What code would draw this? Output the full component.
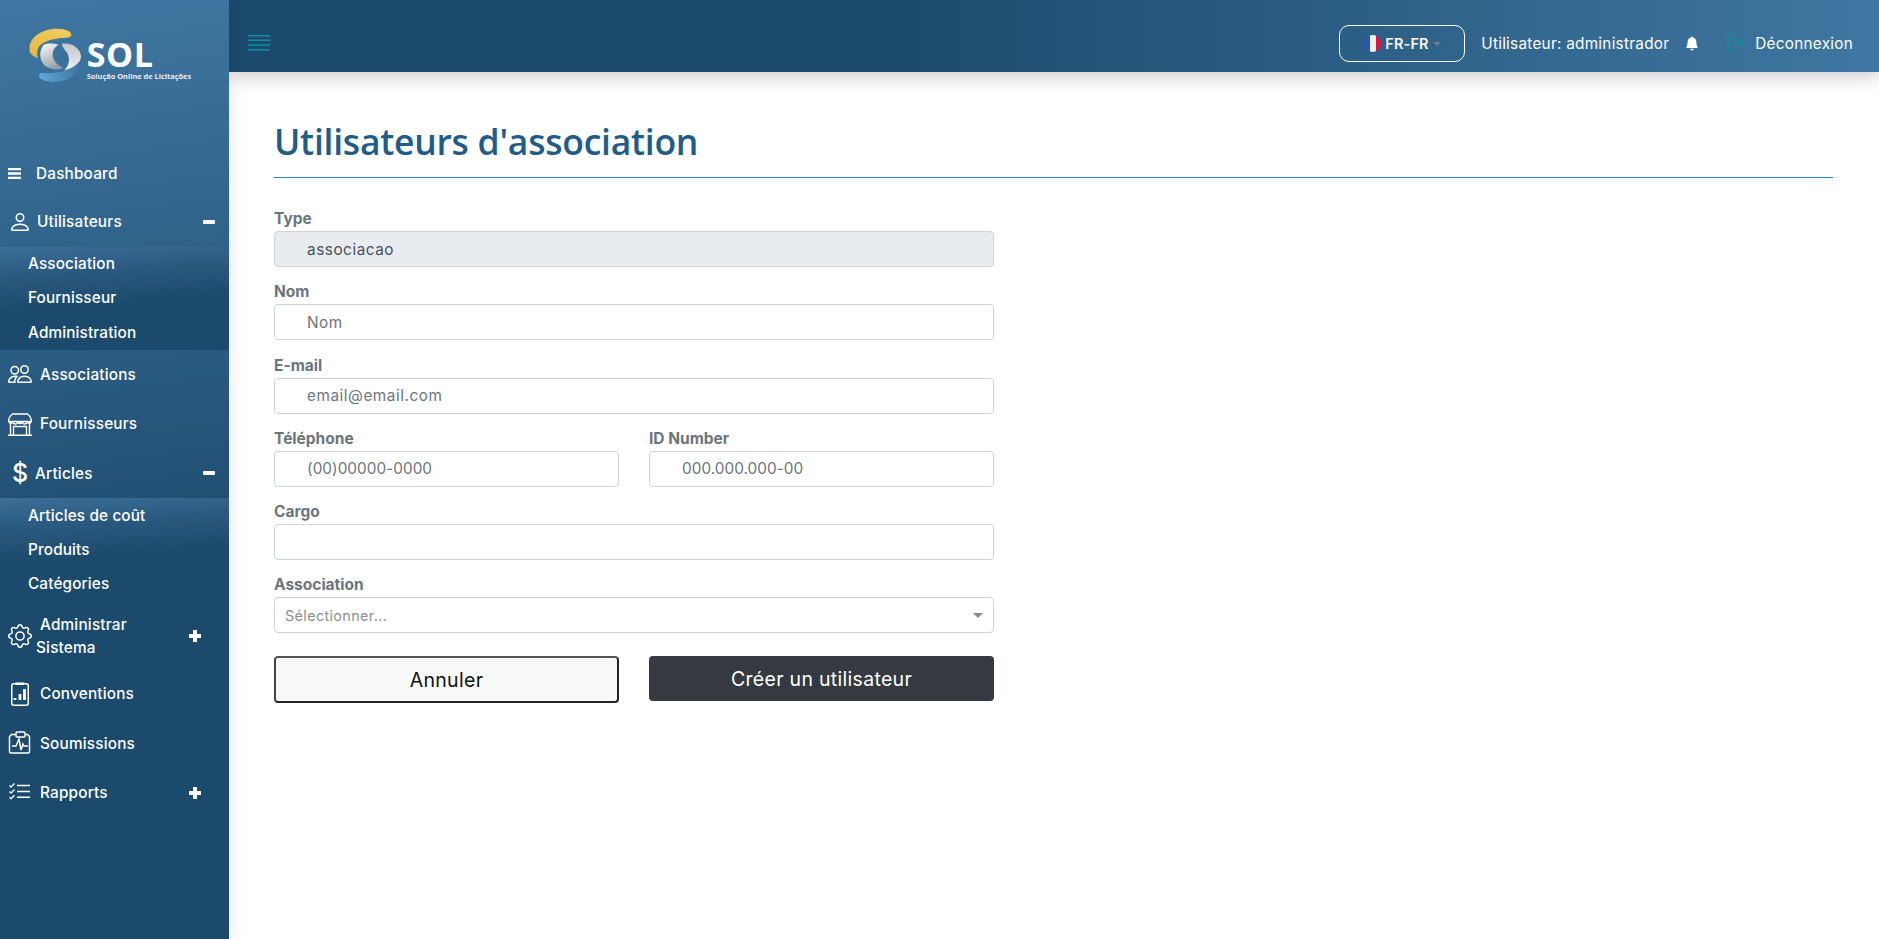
<div class="page">
  <aside class="sidebar">
    <div class="logo">
      <svg class="mark" viewBox="50 50 170 170" aria-hidden="true">
        <defs>
          <linearGradient id="gy" x1="0" y1="1" x2="1" y2="0"><stop offset="0" stop-color="#e6b93f"/><stop offset="1" stop-color="#f0cc62"/></linearGradient>
          <linearGradient id="gg" x1="0.3" y1="0" x2="0.7" y2="1"><stop offset="0" stop-color="#f2f2f2"/><stop offset="1" stop-color="#8f9aa6"/></linearGradient>
          <linearGradient id="gg2" x1="0.5" y1="0" x2="0.5" y2="1"><stop offset="0" stop-color="#c4c6c9"/><stop offset="1" stop-color="#eeeeee"/></linearGradient>
          <linearGradient id="gb" x1="0" y1="0" x2="1" y2="0"><stop offset="0" stop-color="#5fa8da"/><stop offset="1" stop-color="#3f77a2"/></linearGradient>
        </defs>
        <path d="M58 115C55 85 90 55 140 55c30 0 45 10 43 20-3 10-23 7-43 10-25 3-45 12-55 25-6 12-6 24-2 34-12-5-22-12-25-19z" fill="url(#gy)"/>
        <path d="M100 103c-15 17-15 52 10 67 15 8 40 10 48 2-18-7-30-22-31-37-1-15 8-27 18-32-15-5-33-5-45 0z" fill="url(#gg)"/>
        <path d="M155 100c30-5 57 15 57 40-2 20-27 35-50 40 13-15 18-30 10-50-7-12-17-20-17-30z" fill="url(#gg2)"/>
        <path d="M92 188c28 2 78 2 113-30 7 17-15 47-55 55-30 5-60-1-64-15-1-6 2-10 6-10z" fill="url(#gb)"/>
      </svg>
      <div class="wordmark">
        <span class="sol">SOL</span>
        <span class="tagline">Solução Online de Licitações</span>
      </div>
    </div>

    <nav class="menu">
      <a class="item dash"><svg class="ic bars" viewBox="0 0 13 11"><path d="M0 1.200h13M0 5.500h13M0 9.800h13" stroke="#fff" stroke-width="2.300" fill="none"/></svg><span class="t tdash">Dashboard</span></a>

      <a class="item"><svg class="ic big" viewBox="0 0 16 16"><path fill="#fff" d="M8 8a3 3 0 1 0 0-6 3 3 0 0 0 0 6Zm2-3a2 2 0 1 1-4 0 2 2 0 0 1 4 0Zm4 8c0 1-1 1-1 1H3s-1 0-1-1 1-4 6-4 6 3 6 4Zm-1-.004c-.001-.246-.154-.986-.832-1.664C11.516 10.680 10.289 10 8 10c-2.290 0-3.516.680-4.168 1.332-.678.678-.830 1.418-.832 1.664h10Z"/></svg><span class="t tuser">Utilisateurs</span><span class="minus"></span></a>
      <div class="sub">
        <a>Association</a><a>Fournisseur</a><a>Administration</a>
      </div>

      <a class="item"><svg class="ic big" viewBox="0 0 16 16"><path fill="#fff" d="M15 14s1 0 1-1-1-4-5-4-5 3-5 4 1 1 1 1h8Zm-7.978-1A.261.261 0 0 1 7 12.996c.001-.264.167-1.030.760-1.720C8.312 10.629 9.282 10 11 10c1.717 0 2.687.630 3.240 1.276.593.690.758 1.457.760 1.720l-.008.002a.274.274 0 0 1-.014.002H7.022ZM11 7a2 2 0 1 0 0-4 2 2 0 0 0 0 4Zm3-2a3 3 0 1 1-6 0 3 3 0 0 1 6 0ZM6.936 9.280a5.880 5.880 0 0 0-1.230-.247A7.350 7.350 0 0 0 5 9c-4 0-5 3-5 4 0 .667.333 1 1 1h4.216A2.238 2.238 0 0 1 5 13c0-1.010.377-2.042 1.090-2.904.243-.294.526-.569.846-.816ZM4.920 10A5.493 5.493 0 0 0 4 13H1c0-.260.164-1.030.760-1.724.545-.636 1.492-1.256 3.160-1.275ZM1.500 5.500a3 3 0 1 1 6 0 3 3 0 0 1-6 0Zm3-2a2 2 0 1 0 0 4 2 2 0 0 0 0-4Z"/></svg><span class="t">Associations</span></a>

      <a class="item"><svg class="ic big" viewBox="0 0 24 24" fill="none" stroke="#fff" stroke-width="1.400"><path d="M0 23.300h24M2.500 11v12.300M21.500 11v12.300M5.500 22.800V14.500h13v8.300"/><path d="M4.500 2h15c2 1.500 4 4.500 4 7.500H.500c0-3 2-6 4-7.500z"/><path fill="#fff" stroke="none" d="M.5 9h4.600v.8a2.300 2.300 0 0 1-4.600 0zM9.500 9h5v.8a2.500 2.500 0 0 1-5 0zM18.900 9h4.600v.8a2.300 2.300 0 0 1-4.600 0z"/><path d="M5.100 9.800a2.200 2.200 0 0 0 4.400 0M14.500 9.800a2.200 2.200 0 0 0 4.400 0"/></svg><span class="t">Fournisseurs</span></a>

      <a class="item"><span class="ic dollar">$</span><span class="t tart">Articles</span><span class="minus"></span></a>
      <div class="sub second">
        <a>Articles de coût</a><a>Produits</a><a>Catégories</a>
      </div>

      <a class="item two"><svg class="ic big" viewBox="0 0 16 16"><path fill="#fff" d="M8 4.754a3.246 3.246 0 1 0 0 6.492 3.246 3.246 0 0 0 0-6.492zM5.754 8a2.246 2.246 0 1 1 4.492 0 2.246 2.246 0 0 1-4.492 0z"/><path fill="#fff" d="M9.796 1.343c-.527-1.790-3.065-1.790-3.592 0l-.094.319a.873.873 0 0 1-1.255.520l-.292-.160c-1.640-.892-3.433.902-2.540 2.541l.159.292a.873.873 0 0 1-.520 1.255l-.319.094c-1.790.527-1.790 3.065 0 3.592l.319.094a.873.873 0 0 1 .520 1.255l-.160.292c-.892 1.640.901 3.434 2.541 2.540l.292-.159a.873.873 0 0 1 1.255.520l.094.319c.527 1.790 3.065 1.790 3.592 0l.094-.319a.873.873 0 0 1 1.255-.520l.292.160c1.640.893 3.434-.902 2.540-2.541l-.159-.292a.873.873 0 0 1 .520-1.255l.319-.094c1.790-.527 1.790-3.065 0-3.592l-.319-.094a.873.873 0 0 1-.520-1.255l.160-.292c.893-1.640-.902-3.433-2.541-2.540l-.292.159a.873.873 0 0 1-1.255-.520l-.094-.319zm-2.633.283c.246-.835 1.428-.835 1.674 0l.094.319a1.873 1.873 0 0 0 2.693 1.115l.291-.160c.764-.415 1.600.420 1.184 1.185l-.159.292a1.873 1.873 0 0 0 1.116 2.692l.318.094c.835.246.835 1.428 0 1.674l-.319.094a1.873 1.873 0 0 0-1.115 2.693l.160.291c.415.764-.420 1.600-1.185 1.184l-.291-.159a1.873 1.873 0 0 0-2.693 1.116l-.094.318c-.246.835-1.428.835-1.674 0l-.094-.319a1.873 1.873 0 0 0-2.692-1.115l-.292.160c-.764.415-1.600-.420-1.184-1.185l.159-.291A1.873 1.873 0 0 0 1.945 8.930l-.319-.094c-.835-.246-.835-1.428 0-1.674l.319-.094A1.873 1.873 0 0 0 3.060 4.377l-.160-.292c-.415-.764.420-1.600 1.185-1.184l.292.159a1.873 1.873 0 0 0 2.692-1.115l.094-.319z"/></svg><span class="t twol"><span class="l1">Administrar</span><span class="l2">Sistema</span></span><span class="plus"></span></a>

      <a class="item"><svg class="ic big" viewBox="0 0 24 24" fill="none" stroke="#fff" stroke-width="1.500"><rect x="3.750" y="1.750" width="16.500" height="21.500" rx="2"/><rect x="7.500" y=".5" width="8.500" height="2.500" fill="#fff" stroke="none"/><path d="M7 18v-2M12 18v-6M16.500 18V7" stroke-width="2.800"/></svg><span class="t">Conventions</span></a>

      <a class="item"><svg class="ic big" viewBox="0 0 24 24" fill="none" stroke="#fff" stroke-width="1.500"><path d="M8 3.500H3.500l-2 2v15a1.500 1.500 0 0 0 1.500 1.500h17a1.500 1.500 0 0 0 1.500-1.500v-15l-2-2H17"/><rect x="8" y="1" width="9" height="5" rx="1"/><path d="M4 15h4l3-7 2 11 2-6 1 2h4"/></svg><span class="t">Soumissions</span></a>

      <a class="item"><svg class="ic big" viewBox="0 0 24 24" fill="none" stroke="#fff" stroke-width="1.500"><path d="M9 4.500h13M9 10.500h13M9 16.300h13"/><path d="m1.500 4.500 1.500 1.500L6.500 2.500M1.500 10.500 3 12l3.500-3.500M1.500 16.300l1.500 1.500 3.500-3.500" stroke-width="1.300"/></svg><span class="t">Rapports</span><span class="plus"></span></a>
    </nav>
  </aside>

  <div class="main">
    <header class="top">
      <svg class="burger" viewBox="0 0 22 15.500" width="22" height="15.500"><path d="M0 .8h22M0 5.300h22M0 10h22M0 14.700h22" stroke="#0d8d9f" stroke-width="1.600"/></svg>
      <div class="right">
        <button class="lang">
          <span class="flag"><i class="b"></i><i class="w"></i><i class="r"></i></span>
          <span class="code">FR-FR</span>
          <span class="caret"></span>
        </button>
        <span class="user">Utilisateur: administrador</span>
        <svg class="bell" viewBox="0 0 16 16" width="14" height="15"><path fill="#fff" d="M8 16a2 2 0 0 0 2-2H6a2 2 0 0 0 2 2zm.995-14.901a1 1 0 1 0-1.990 0A5.002 5.002 0 0 0 3 6c0 1.098-.5 6-2 7h14c-1.500-1-2-5.902-2-7 0-2.420-1.720-4.440-4.005-4.901z"/></svg>
        <svg class="exit" viewBox="0 0 18 18" width="18" height="18" fill="none" stroke="#0d8d9f" stroke-width="1.500"><path d="M7 1H1v16h6M5 9h11.500M12 4.500 16.500 9 12 13.500"/></svg>
        <span class="logout">Déconnexion</span>
      </div>
    </header>

    <main class="content">
      <h1>Utilisateurs d'association</h1>
      <form class="form">
        <div class="field"><label for="f1">Type</label><input id="f1" class="ctl off" value="associacao" readonly /></div>
        <div class="field"><label for="f2">Nom</label><input id="f2" class="ctl" placeholder="Nom" /></div>
        <div class="field"><label for="f3">E-mail</label><input id="f3" class="ctl" placeholder="email@email.com" /></div>
        <div class="pair">
          <div class="field"><label for="f4">Téléphone</label><input id="f4" class="ctl num" placeholder="(00)00000-0000" /></div>
          <div class="field"><label for="f5">ID Number</label><input id="f5" class="ctl num" placeholder="000.000.000-00" /></div>
        </div>
        <div class="field"><label for="f6">Cargo</label><input id="f6" class="ctl" /></div>
        <div class="field"><span class="lbl">Association</span>
          <div class="select"><span>Sélectionner...</span><i></i></div>
        </div>
        <div class="pair btns">
          <button type="button" class="cancel">Annuler</button>
          <button type="button" class="create">Créer un utilisateur</button>
        </div>
      </form>
    </main>
  </div>
</div>

<style>
  :global(body) { margin: 0; background: #fff; }
  .page {
    display: flex; height: 939px; width: 1879px; overflow: hidden;
    font-family: Inter, "Noto Sans", sans-serif; color: #fff;
  }
  .sidebar {
    width: 229px; flex: none; position: relative; z-index: 3;
    background: linear-gradient(172deg, #3f77a2 0%, #2f6188 30%, #1c4a6c 62%);
    box-shadow: 4px 0 14px rgba(0,0,0,.08);
  }
  .logo { height: 149px; box-sizing: border-box; padding: 27px 0 0 27px; display: flex; align-items: flex-start; }
  .mark { flex: none; width: 56.700px; height: 56.700px; }
  .wordmark { display: flex; flex-direction: column; margin: 13px 0 0 3px; }
  .sol { font: 700 34px/28px "Open Sans", sans-serif; letter-spacing: .6px; color: #fff; }
  .tagline { font: 700 7.400px/9px "Open Sans", sans-serif; color: #e6edf3; white-space: nowrap; margin-top: 4px; }

  .item {
    display: flex; align-items: center; height: 49.500px; position: relative;
    font-size: 15.300px; font-weight: 450; letter-spacing: .2px; color: #fff;
  }
  .item.dash { height: 48px; }
  .item.two { height: 67px; }
  .ic { position: absolute; left: 10px; width: 20px; height: 20px; }
  .ic.big { left: 8px; width: 24px; height: 24px; }
  .ic.bars { left: 8px; width: 13px; height: 11px; }
  .dollar { left: 12px; width: auto; height: auto; font-size: 25px; line-height: 25px; font-weight: 500; font-family: Inter, sans-serif; }
  .t { margin-left: 40px; }
  .t.tdash { margin-left: 36px; }
  .t.tuser { margin-left: 37px; }
  .t.tart { margin-left: 35px; }
  .twol { display: flex; flex-direction: column; line-height: 23px; margin-left: 36px; }
  .l1 { margin-left: 4px; }
  .minus { position: absolute; left: 203px; top: 50%; margin-top: -2px; width: 12px; height: 4px; border-radius: 1px; background: #fff; }
  .plus { position: absolute; left: 189px; top: 50%; margin-top: -6px; width: 12px; height: 12px;
    background:
      linear-gradient(#fff,#fff) center/12px 4px no-repeat,
      linear-gradient(#fff,#fff) center/4px 12px no-repeat; }
  .sub {
    height: 103px; display: flex; flex-direction: column;
    background: linear-gradient(176deg, #3b6f98 0%, #2b5a80 25%, #1c4a6c 55%);
  }
  .sub.second { height: 104px; }
  .sub a { height: 34.400px; display: flex; align-items: center; padding-left: 28px; font-size: 15.300px; font-weight: 450; letter-spacing: .15px; color: #fff; }

  .main { flex: 1; min-width: 0; display: flex; flex-direction: column; }
  .top {
    height: 72px; flex: none; box-sizing: border-box; display: flex; align-items: center; justify-content: space-between;
    padding: 14px 26px 0 19px; position: relative; z-index: 2;
    background: linear-gradient(90deg, #1c4a6c 0%, #1c4a6c 40%, #3f77a2 100%);
    box-shadow: 0 4px 18px rgba(0,0,0,.22);
  }
  .right { display: flex; align-items: center; font-size: 15.300px; letter-spacing: .27px; }
  .lang {
    width: 126px; height: 37px; box-sizing: border-box; border: 1px solid #fff; border-radius: 10px; background: transparent;
    display: flex; align-items: center; padding: 0 0 0 24px; color: #fff; font: 600 14.400px Inter, sans-serif; letter-spacing: .2px;
  }
  .flag { flex: none; width: 17px; height: 17px; border-radius: 50%; overflow: hidden; display: flex; margin-right: 4px; }
  .flag i { flex: 1; }
  .b { background: #2a56b8; } .w { background: #eef0f4; } .r { background: #e0173a; }
  .caret { border: 4px solid transparent; border-top-color: #6e7f8e; border-bottom: 0; margin-left: 4px; margin-top: 2px; }
  .user { margin-left: 16px; }
  .bell { margin-left: 16px; }
  .exit { margin-left: 28px; }
  .logout { margin-left: 10px; }

  .content { flex: 1; padding: 44px 46px 0 45px; color: #6c757d; }
  h1 {
    margin: 0; height: 62px; box-sizing: border-box;
    border-bottom: 1px solid #2a80d0;
    font: 600 35.500px/51px "Open Sans", sans-serif; letter-spacing: -.25px; color: #1f5c89;
  }
  .form { width: 720px; margin-top: 30px; display: flex; flex-direction: column; gap: 14.300px; }
  .field { display: flex; flex-direction: column; flex: 1; min-width: 0; }
  label, .lbl {
    font-size: 15.500px; line-height: 22px; font-weight: 700; color: #6c757d; margin-bottom: 1px; display: block; height: 22px;
  }
  .ctl {
    height: 36px; box-sizing: border-box; width: 100%; border: 1px solid #ced4da; border-radius: 4px;
    padding: 0 12px 0 32px; font: 400 15.300px Inter, sans-serif; letter-spacing: .55px; color: #495057; background: #fff; outline: none;
  }
  .ctl.num { letter-spacing: .05px; }
  .ctl::placeholder { color: #6c757d; opacity: 1; }
  .off { background: #e9ecef; }
  .pair { display: flex; gap: 30px; }
  .select {
    height: 36px; box-sizing: border-box; border: 1px solid #ced4da; border-radius: 4px; background: #fff;
    display: flex; align-items: center; justify-content: space-between; padding: 0 8px 0 10px;
    font-size: 14.400px; letter-spacing: .35px; color: #8a8f94;
  }
  .select i { border: 5px solid transparent; border-top-color: #888; border-bottom: 0; margin-right: 2px; }
  .btns { margin-top: 8.700px; align-items: flex-start; }
  .btns button { flex: none; width: 345px; padding: 0; box-sizing: border-box; font: 400 19.500px Inter, sans-serif; letter-spacing: .3px; border-radius: 4px; }
  .cancel { height: 47px; background: #f8f9fa; color: #111; border: 2px solid #212529; border-top-color: #555; border-left-color: #444; }
  .create { height: 45px; background: #343a40; color: #fff; border: 0; }
</style>
